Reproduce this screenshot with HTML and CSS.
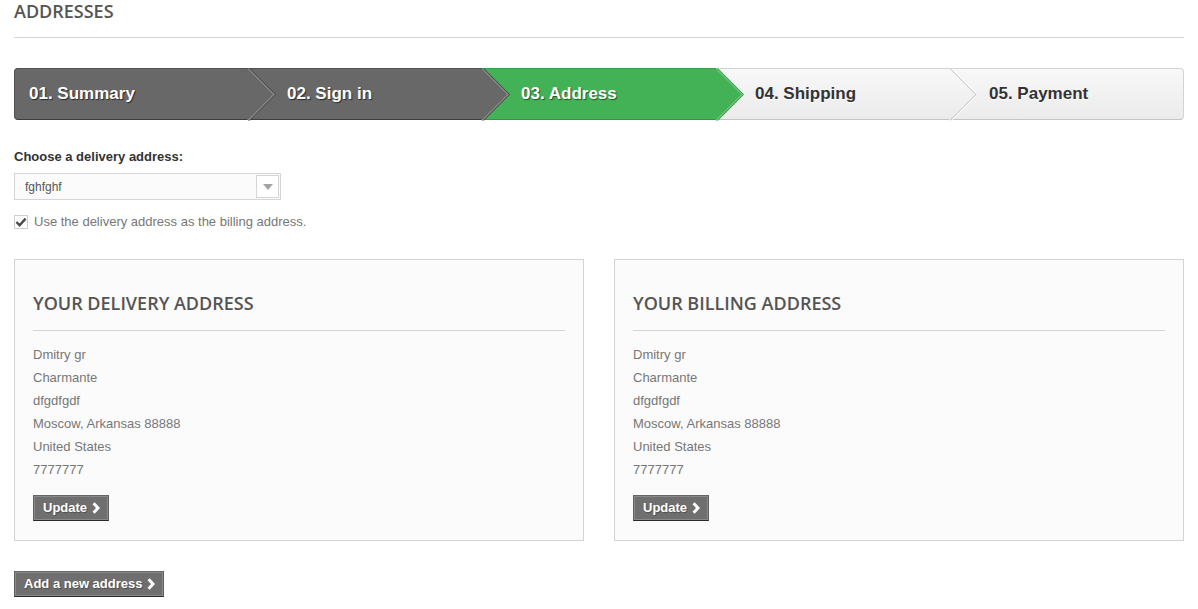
FILE: index.html
```html
<!DOCTYPE html>
<html>
<head>
<meta charset="utf-8">
<title>Addresses</title>
<link rel="stylesheet" href="styles.css">
</head>
<body>
<div class="page">
  <h1 class="page-heading">Addresses</h1>

  <ul class="steps">
    <li class="step done first"><span>01. Summary</span></li>
    <li class="step done"><span>02. Sign in</span></li>
    <li class="step current"><span>03. Address</span></li>
    <li class="step todo"><span>04. Shipping</span></li>
    <li class="step todo last"><span>05. Payment</span></li>
  </ul>

  <div class="choose">
    <label class="choose-label">Choose a delivery address:</label>
    <div class="select">
      <span class="select-value">fghfghf</span>
      <span class="select-arrow"></span>
    </div>
    <div class="check-row">
      <span class="check-box">
        <svg width="12" height="12" viewBox="0 0 12 12"><polyline points="1.4,6 4.6,9.2 10.6,2.6" fill="none" stroke="#4a4a4a" stroke-width="2.4"/></svg>
      </span>
      <span class="check-label">Use the delivery address as the billing address.</span>
    </div>
  </div>

  <div class="addresses">
    <div class="address-box">
      <h3 class="address-title">Your delivery address</h3>
      <ul class="address-lines">
        <li>Dmitry gr</li>
        <li>Charmante</li>
        <li>dfgdfgdf</li>
        <li>Moscow, Arkansas 88888</li>
        <li>United States</li>
        <li>7777777</li>
      </ul>
      <a class="btn" href="#"><span class="btn-inner">Update <svg class="chev" width="8" height="12" viewBox="0 0 8 12"><polyline points="1.6,1.3 6,6 1.6,10.7" fill="none" stroke="#fff" stroke-width="3"/></svg></span></a>
    </div>
    <div class="address-box">
      <h3 class="address-title">Your billing address</h3>
      <ul class="address-lines">
        <li>Dmitry gr</li>
        <li>Charmante</li>
        <li>dfgdfgdf</li>
        <li>Moscow, Arkansas 88888</li>
        <li>United States</li>
        <li>7777777</li>
      </ul>
      <a class="btn" href="#"><span class="btn-inner">Update <svg class="chev" width="8" height="12" viewBox="0 0 8 12"><polyline points="1.6,1.3 6,6 1.6,10.7" fill="none" stroke="#fff" stroke-width="3"/></svg></span></a>
    </div>
  </div>

  <div class="add-row">
    <a class="btn" href="#"><span class="btn-inner">Add a new address <svg class="chev" width="8" height="12" viewBox="0 0 8 12"><polyline points="1.6,1.3 6,6 1.6,10.7" fill="none" stroke="#fff" stroke-width="3"/></svg></span></a>
  </div>
</div>
</body>
</html>
```

FILE: styles.css
```css
html, body {
  margin: 0;
  padding: 0;
  background: #fff;
}

.page {
  padding: 0 14px;
  font-family: "Liberation Sans", Arial, sans-serif;
  font-size: 13px;
  color: #777;
}

.page-heading {
  margin: 0 0 30px;
  padding: 0 0 15px;
  font: 600 18px/22px "Open Sans", sans-serif;
  color: #555454;
  text-transform: uppercase;
  border-bottom: 1px solid #d6d4d4;
}

/* ---------- steps ---------- */
.steps {
  display: flex;
  list-style: none;
  margin: 0;
  padding: 0;
  height: 52px;
}

.step {
  position: relative;
  width: 20%;
  flex: none;
  box-sizing: border-box;
  height: 52px;
  padding-left: 39px;
  display: flex;
  align-items: center;
  border-top: 1px solid;
  border-bottom: 1px solid;
  font: bold 17px/20px "Liberation Sans", Arial, sans-serif;
}

.step:nth-child(1) { z-index: 5; }
.step:nth-child(2) { z-index: 4; }
.step:nth-child(3) { z-index: 3; }
.step:nth-child(4) { z-index: 2; }
.step:nth-child(5) { z-index: 1; }

.step span {
  position: relative;
  z-index: 2;
}

.step::after {
  content: "";
  position: absolute;
  top: calc(50% - 18.5px);
  right: -18.5px;
  width: 36px;
  height: 36px;
  border-top: 1px solid;
  border-right: 1px solid;
  transform: rotate(45deg);
  z-index: 1;
}

.step.first {
  border-left: 1px solid;
  border-radius: 4px 0 0 4px;
  padding-left: 14px;
}

.step.last {
  border-right: 1px solid;
  border-radius: 0 4px 4px 0;
}

.step.last::after {
  display: none;
}

.step.done {
  background: #686868;
  border-color: #505050 #505050 #3d3d3d;
  color: #fff;
  text-shadow: 1px 1px 1px rgba(0, 0, 0, 0.6);
}

.step.done::after {
  background: #686868;
  border-color: #8f8f8f;
  box-shadow: 1px -1px 0 #4a4a4a;
}

.step.current {
  background: #43b155;
  border-color: #3b9f4b #3b9f4b #359246;
  color: #fff;
  text-shadow: 1px 1px 1px rgba(0, 0, 0, 0.5);
}

.step.current::after {
  background: #43b155;
  border-color: #74c882;
  box-shadow: 1px -1px 0 #3a9b49;
}

.step.todo {
  background: linear-gradient(#f8f8f8, #ebebeb);
  border-color: #d3d3d3 #d3d3d3 #c4c4c4;
  color: #333;
  text-shadow: 0 1px 0 #fff;
}

.step.todo::after {
  background: linear-gradient(135deg, #f8f8f8, #ebebeb);
  border-color: #cfcfcf;
  box-shadow: 1px -1px 0 #fdfdfd;
}

/* ---------- chooser ---------- */
.choose {
  margin-top: 28px;
}

.choose-label {
  display: block;
  font: bold 13px/18px "Liberation Sans", Arial, sans-serif;
  color: #333;
}

.select {
  margin-top: 7px;
  width: 267px;
  height: 27px;
  box-sizing: border-box;
  border: 1px solid #d6d4d4;
  background: #fbfbfb;
  display: flex;
  align-items: center;
  padding: 0 1px 0 10px;
}

.select-value {
  flex: 1;
  font: 12px/16px "Liberation Sans", Arial, sans-serif;
  color: #555;
}

.select-arrow {
  width: 23px;
  height: 23px;
  box-sizing: border-box;
  border: 1px solid #d6d4d4;
  background: #fff;
  display: flex;
  align-items: center;
  justify-content: center;
}

.select-arrow::after {
  content: "";
  width: 0;
  height: 0;
  border-left: 5px solid transparent;
  border-right: 5px solid transparent;
  border-top: 6px solid #a3a3a3;
  margin-top: 1px;
}

.check-row {
  margin-top: 13px;
  display: flex;
  align-items: center;
  gap: 6px;
  height: 18px;
}

.check-box {
  width: 14px;
  height: 14px;
  box-sizing: border-box;
  border: 1px solid #cfcfcf;
  background: #fff;
  display: flex;
  align-items: center;
  justify-content: center;
}

.check-box svg {
  display: block;
}

.check-label {
  font: 13px/18px "Liberation Sans", Arial, sans-serif;
  color: #777;
}

/* ---------- addresses ---------- */
.addresses {
  margin-top: 28px;
  display: grid;
  grid-template-columns: 1fr 1fr;
  gap: 30px;
}

.address-box {
  border: 1px solid #d6d4d4;
  background: #fbfbfb;
  padding: 32px 18px 19px;
}

.address-title {
  margin: 0 0 12px;
  padding: 0 0 16px;
  font: 600 18px/22px "Open Sans", sans-serif;
  color: #555454;
  text-transform: uppercase;
  border-bottom: 1px solid #d6d4d4;
}

.address-lines {
  list-style: none;
  margin: 0 0 14px;
  padding: 0;
  font: 13px/23px "Liberation Sans", Arial, sans-serif;
  color: #777;
}

/* ---------- buttons ---------- */
.btn {
  display: inline-flex;
  vertical-align: top;
  text-decoration: none;
  background: #6f6f6f;
  border: 1px solid;
  border-color: #666 #5f5f5f #292929 #5f5f5f;
}

.btn-inner {
  display: inline-flex;
  align-items: center;
  gap: 5px;
  border: 1px solid #8b8a8a;
  padding: 3px 7px 3px 8px;
  font: bold 13px/16px "Liberation Sans", Arial, sans-serif;
  color: #fff;
  text-shadow: 1px 1px 1px rgba(0, 0, 0, 0.3);
}

.chev {
  display: block;
}

.add-row {
  margin-top: 30px;
}
```
